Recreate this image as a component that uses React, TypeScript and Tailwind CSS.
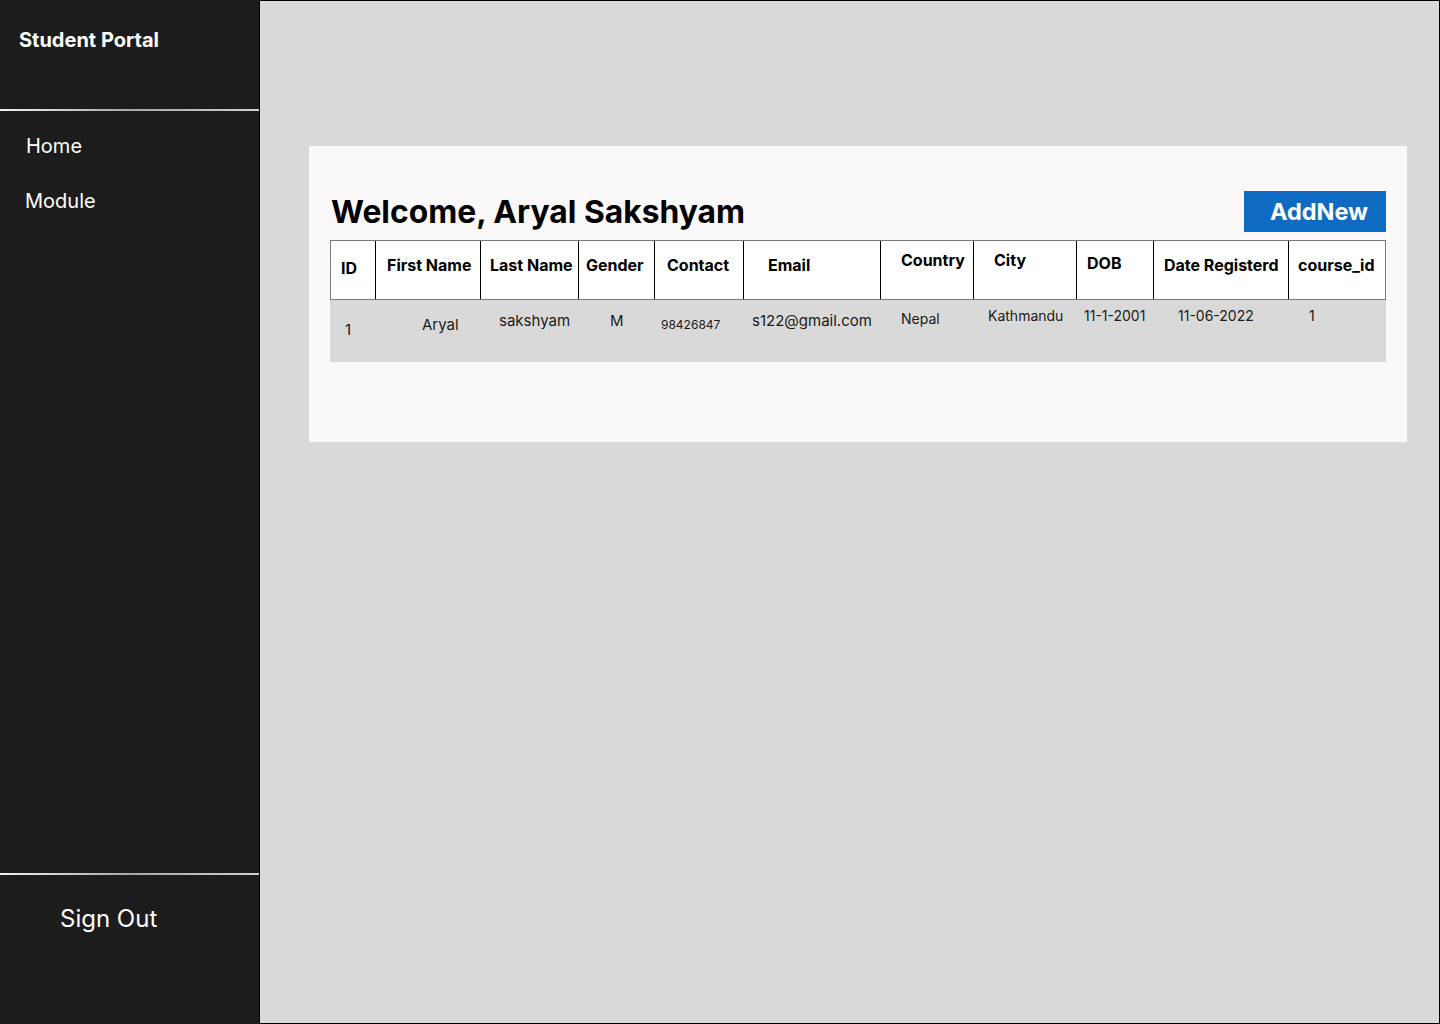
import React from "react";

const cols = [
  { w: 46, h: "ID", hp: "pl-[10px] pt-[17px]", v: "1", vp: "pl-[15px] pt-[20px] text-[15px]" },
  { w: 105, h: "First Name", hp: "pl-[11px] pt-[14px]", v: "Aryal", vp: "pl-[46px] pt-[15px] text-[15px]" },
  { w: 98, h: "Last Name", hp: "pl-[9px] pt-[14px]", v: "sakshyam", vp: "pl-[18px] pt-[11px] text-[15px]" },
  { w: 76, h: "Gender", hp: "pl-[7px] pt-[14px]", v: "M", vp: "pl-[31px] pt-[11px] text-[15px]" },
  { w: 89, h: "Contact", hp: "pl-[12px] pt-[14px]", v: "98426847", vp: "pl-[6px] pt-[15px] text-[12px] leading-[16px]" },
  { w: 137, h: "Email", hp: "pl-[24px] pt-[14px]", v: "s122@gmail.com", vp: "pl-[8px] pt-[11px] text-[15px]" },
  { w: 93, h: "Country", hp: "pl-[20px] pt-[9px]", v: "Nepal", vp: "pl-[20px] pt-[9px] text-[14px]" },
  { w: 103, h: "City", hp: "pl-[20px] pt-[9px]", v: "Kathmandu", vp: "pl-[14px] pt-[6px] text-[14px]" },
  { w: 77, h: "DOB", hp: "pl-[10px] pt-[12px]", v: "11-1-2001", vp: "pl-[7px] pt-[6px] text-[14px]" },
  { w: 135, h: "Date Registerd", hp: "pl-[10px] pt-[14px]", v: "11-06-2022", vp: "pl-[24px] pt-[6px] text-[14px]" },
  { w: 97, h: "course_id", hp: "pl-[9px] pt-[14px]", v: "1", vp: "pl-[20px] pt-[6px] text-[14px]" },
];

export default function App() {
  return (
    <div
      className="flex h-[1024px] w-[1440px] overflow-hidden"
      style={{ fontFamily: "Inter, 'Noto Sans', sans-serif" }}
    >
      <aside className="flex h-full w-[260px] shrink-0 flex-col border-r border-black bg-[#1c1c1c] text-white">
        <div className="h-[109px] pl-[19px] pt-[26px]">
          <div className="text-[20px] font-bold leading-[28px]">Student Portal</div>
        </div>
        <div className="h-[2px] bg-gradient-to-r from-[#f2f2f2] via-[#a8a8a8] to-[#d0d0d0]" />
        <nav className="flex flex-col gap-[27px] pt-[21px]">
          <div className="pl-[26px] text-[20px] leading-[28px]">Home</div>
          <div className="pl-[25px] text-[20px] leading-[28px]">Module</div>
        </nav>
        <div className="mt-auto">
          <div className="h-[2px] bg-gradient-to-r from-[#f2f2f2] via-[#a8a8a8] to-[#d0d0d0]" />
          <div className="h-[149px] pl-[60px] pt-[28px] text-[24px] leading-[32px]">Sign Out</div>
        </div>
      </aside>

      <main className="flex-1 border-y border-r border-black bg-[#d9d9d9] pl-[49px] pr-[32px] pt-[145px]">
        <section className="bg-[#faf8f9] px-[21px] pb-[80px] pt-[45px]">
          <div className="mb-[8px] flex h-[41px] items-center justify-between">
            <h1 className="pl-[1px] text-[31.8px] font-bold leading-[41px] text-black">
              Welcome, Aryal Sakshyam
            </h1>
            <button className="flex h-[41px] w-[142px] items-center justify-center pl-[8px] bg-[#0f6bc2] text-[23.5px] font-bold text-white">
              AddNew
            </button>
          </div>

          <div className="w-[1056px]">
            <div className="flex h-[60px] border border-[#7a7a7a] bg-white">
              {cols.map((c, i) => (
                <div
                  key={c.h}
                  className={`shrink-0 text-[16px] font-bold leading-[20px] text-black ${c.hp} ${
                    i < cols.length - 1 ? "border-r border-black" : ""
                  }`}
                  style={{ width: i === 0 ? c.w - 1 : i === cols.length - 1 ? c.w - 1 : c.w }}
                >
                  {c.h}
                </div>
              ))}
            </div>
            <div className="flex h-[62px] bg-[#d9d9d9]">
              {cols.map((c) => (
                <div
                  key={c.h}
                  className={`shrink-0 leading-[20px] text-[#1a1a1a] ${c.vp}`}
                  style={{ width: c.w }}
                >
                  {c.v}
                </div>
              ))}
            </div>
          </div>
        </section>
      </main>
    </div>
  );
}
